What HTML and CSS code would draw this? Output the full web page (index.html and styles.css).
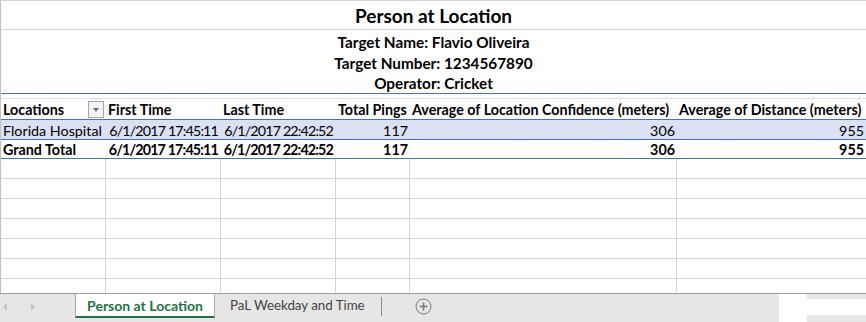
FILE: index.html
```html
<!DOCTYPE html>
<html lang="en">
<head>
  <meta charset="UTF-8">
  <title>Person at Location</title>
  <link rel="stylesheet" href="styles.css">
</head>
<body>
  <div class="sheet">
    <div class="title">Person at Location</div>
    <div class="info">
      <div>Target Name: Flavio Oliveira</div>
      <div>Target Number: 1234567890</div>
      <div>Operator: Cricket</div>
    </div>
    <div class="spacer"></div>

    <div class="row head">
      <div class="cell">Locations<span class="filter"></span></div>
      <div class="cell">First Time</div>
      <div class="cell">Last Time</div>
      <div class="cell">Total Pings</div>
      <div class="cell">Average of Location Confidence (meters)</div>
      <div class="cell">Average of Distance (meters)</div>
    </div>
    <div class="row data">
      <div class="cell">Florida Hospital</div>
      <div class="cell num date">6/1/2017 17:45:11</div>
      <div class="cell num date">6/1/2017 22:42:52</div>
      <div class="cell num">117</div>
      <div class="cell num">306</div>
      <div class="cell num">955</div>
    </div>
    <div class="row total">
      <div class="cell">Grand Total</div>
      <div class="cell num date">6/1/2017 17:45:11</div>
      <div class="cell num date">6/1/2017 22:42:52</div>
      <div class="cell num">117</div>
      <div class="cell num">306</div>
      <div class="cell num">955</div>
    </div>

    <div class="row empty"><div class="cell"></div><div class="cell"></div><div class="cell"></div><div class="cell"></div><div class="cell"></div><div class="cell"></div></div>
    <div class="row empty"><div class="cell"></div><div class="cell"></div><div class="cell"></div><div class="cell"></div><div class="cell"></div><div class="cell"></div></div>
    <div class="row empty"><div class="cell"></div><div class="cell"></div><div class="cell"></div><div class="cell"></div><div class="cell"></div><div class="cell"></div></div>
    <div class="row empty"><div class="cell"></div><div class="cell"></div><div class="cell"></div><div class="cell"></div><div class="cell"></div><div class="cell"></div></div>
    <div class="row empty"><div class="cell"></div><div class="cell"></div><div class="cell"></div><div class="cell"></div><div class="cell"></div><div class="cell"></div></div>
    <div class="row empty"><div class="cell"></div><div class="cell"></div><div class="cell"></div><div class="cell"></div><div class="cell"></div><div class="cell"></div></div>
    <div class="row empty"><div class="cell"></div><div class="cell"></div><div class="cell"></div><div class="cell"></div><div class="cell"></div><div class="cell"></div></div>
  </div>

  <div class="tabs">
    <div class="nav">
      <span class="arrow left"></span>
      <span class="arrow right"></span>
    </div>
    <div class="tab active">Person at Location</div>
    <div class="tab">PaL Weekday and Time</div>
    <div class="sep"></div>
    <div class="add">
      <svg width="17" height="17" viewBox="0 0 17 17">
        <circle cx="8.5" cy="8.5" r="7.5" fill="none" stroke="#7a7a7a" stroke-width="1"/>
        <path d="M8.5 4.5v8M4.5 8.5h8" stroke="#7a7a7a" stroke-width="1.6"/>
      </svg>
    </div>
    <div class="fill"></div>
    <div class="split"></div>
    <div class="hscroll"></div>
  </div>
</body>
</html>
```

FILE: styles.css
```css
body {
  margin: 0;
  background: #fff;
  font-family: 'Lato', 'Liberation Sans', sans-serif;
  color: #000;
}
* {
  box-sizing: border-box;
}
.sheet {
  width: 866px;
  height: 293px;
  overflow: hidden;
  border-top: 1px solid #d4d4d4;
  border-left: 1px solid #c0c0c0;
}
.title {
  height: 29px;
  border-bottom: 1px solid #d4d4d4;
  text-align: center;
  font-weight: bold;
  font-size: 19px;
  line-height: 30px;
}
.info {
  height: 64px;
  padding-top: 2px;
  border-bottom: 1px solid #4472c4;
  text-align: center;
  font-weight: bold;
  font-size: 15.3px;
  line-height: 20.5px;
}
.spacer {
  height: 5px;
  border-bottom: 1px solid #d9e1f2;
}
.row {
  display: grid;
  grid-template-columns: 105px 115px 115px 74px 267px 189px;
  font-size: 14.3px;
  line-height: 19px;
  white-space: nowrap;
}
.cell {
  padding: 0 2px;
  overflow: hidden;
}
.num {
  text-align: right;
}
.date {
  letter-spacing: -0.85px;
  padding-right: 3px;
}
.head {
  height: 21px;
  border-bottom: 1px solid #4472c4;
  font-weight: bold;
  padding-top: 1px;
}
.head .cell:first-child {
  position: relative;
}
.filter {
  position: absolute;
  left: 87px;
  top: 1px;
  width: 16px;
  height: 17px;
  border: 1px solid #a6a6a6;
  background: #f4f4f4;
}
.filter::after {
  content: "";
  position: absolute;
  left: 4px;
  top: 6px;
  border-left: 3.5px solid transparent;
  border-right: 3.5px solid transparent;
  border-top: 4px solid #707070;
}
.data {
  height: 20px;
  background: #d9e1f2;
  border-bottom: 1px solid #4472c4;
  padding-top: 1px;
}
.total {
  height: 19px;
  border-bottom: 1px solid #4472c4;
  font-weight: bold;
}
.empty {
  height: 20px;
  border-bottom: 1px solid #d4d4d4;
}
.empty .cell {
  border-right: 1px solid #d4d4d4;
}
.empty .cell:last-child {
  border-right: none;
}

.tabs {
  display: flex;
  width: 866px;
  height: 29px;
  background: #e6e6e6;
  border-top: 1px solid #9e9e9e;
  font-size: 14px;
}
.nav {
  width: 75px;
  position: relative;
}
.arrow {
  position: absolute;
  top: 9px;
  border-top: 4px solid transparent;
  border-bottom: 4px solid transparent;
}
.arrow.left {
  left: 3px;
  border-right: 4px solid #c4c4c4;
}
.arrow.right {
  left: 31px;
  border-left: 4px solid #c4c4c4;
}
.tab {
  height: 24px;
  padding: 0 16px 0 15px;
  line-height: 23px;
  font-size: 13.3px;
  color: #444;
}
.tab.active {
  width: 140px;
  padding: 0;
  text-align: center;
  background: #fff;
  color: #217346;
  font-weight: bold;
  font-size: 14px;
  border-left: 1px solid #ababab;
  border-right: 1px solid #ababab;
  border-bottom: 2px solid #217346;
}
.sep {
  width: 1px;
  height: 19px;
  margin: 3px 0 0 0;
  background: #8a8a8a;
}
.add {
  padding: 4px 0 0 33px;
}
.fill {
  flex: 1;
}
.split {
  width: 28px;
  background: #fff;
}
.hscroll {
  width: 59px;
  background: #fff;
  border-top: 5px solid #e6e6e6;
  border-bottom: 7px solid #e6e6e6;
}
```
